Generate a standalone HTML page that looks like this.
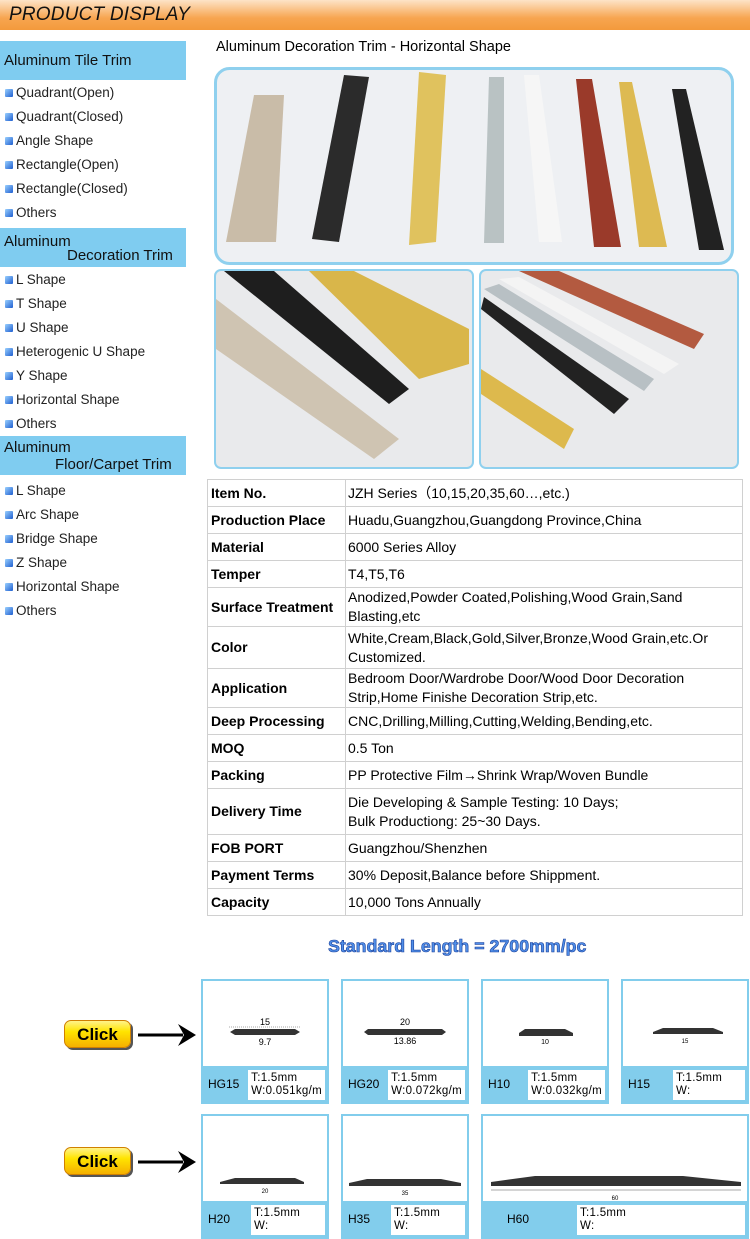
<!DOCTYPE html>
<html><head><meta charset="utf-8"><style>
*{margin:0;padding:0;box-sizing:border-box}
body{width:750px;height:1239px;position:relative;background:#fff;font-family:"Liberation Sans",Arial,sans-serif;color:#000;overflow:hidden}
.a{position:absolute}
.hdr{left:0;top:0;width:750px;height:30px;background:linear-gradient(#fde3c7,#f7a550 60%,#f39a3c)}
.hdr span{position:absolute;left:9px;top:4px;font-size:19px;font-style:italic;color:#111;letter-spacing:0.2px}
.sh{left:0;width:186px;height:39px;background:#7fccf0;font-size:15px;color:#111}
.it{left:5px;font-size:13.5px;color:#222}
.it:before{content:"";display:inline-block;width:8px;height:8px;margin-right:3px;background:linear-gradient(135deg,#9ad0ff,#1f5fd0);border-radius:1px;vertical-align:0px}
table{border-collapse:collapse;position:absolute;left:207px;top:479px;width:536px}
td{border:1px solid #d0d0d0;font-size:14px;padding:0 2px;line-height:19px;vertical-align:middle}
td.k{font-weight:bold;width:138px;padding-left:3px}
.card{border:2px solid #82cdec;background:#fff}
.card .bot{position:absolute;left:0;right:0;bottom:0;height:36px;background:#82cdec}
.card .lab{position:absolute;left:5px;bottom:11px;font-size:12px}
.card .spec{position:absolute;right:2px;bottom:2px;background:#fff;font-size:11.5px;line-height:13px;padding:2px 3px;letter-spacing:0.3px}
.click{width:67px;height:28px;border-radius:7px;background:linear-gradient(#fff38a,#ffe400 40%,#f5b000);box-shadow:2px 2px 0 #555;font-size:17px;font-weight:bold;text-align:center;line-height:28px;border:1px solid #d08000}
</style></head><body>
<div class="a hdr"><span>PRODUCT DISPLAY</span></div>

<div class="a sh" style="top:41px"><div style="position:absolute;left:4px;top:11px">Aluminum Tile Trim</div></div>
<div class="a it" style="top:85px">Quadrant(Open)</div>
<div class="a it" style="top:109px">Quadrant(Closed)</div>
<div class="a it" style="top:133px">Angle Shape</div>
<div class="a it" style="top:157px">Rectangle(Open)</div>
<div class="a it" style="top:181px">Rectangle(Closed)</div>
<div class="a it" style="top:205px">Others</div>
<div class="a sh" style="top:228px"><div style="position:absolute;left:4px;top:5px">Aluminum</div><div style="position:absolute;left:67px;top:19px">Decoration Trim</div></div>
<div class="a it" style="top:272px">L Shape</div>
<div class="a it" style="top:296px">T Shape</div>
<div class="a it" style="top:320px">U Shape</div>
<div class="a it" style="top:344px">Heterogenic U Shape</div>
<div class="a it" style="top:368px">Y Shape</div>
<div class="a it" style="top:392px">Horizontal Shape</div>
<div class="a it" style="top:416px">Others</div>
<div class="a sh" style="top:436px"><div style="position:absolute;left:4px;top:3px">Aluminum</div><div style="position:absolute;left:55px;top:20px">Floor/Carpet Trim</div></div>
<div class="a it" style="top:483px">L Shape</div>
<div class="a it" style="top:507px">Arc Shape</div>
<div class="a it" style="top:531px">Bridge Shape</div>
<div class="a it" style="top:555px">Z Shape</div>
<div class="a it" style="top:579px">Horizontal Shape</div>
<div class="a it" style="top:603px">Others</div>

<div class="a" style="left:216px;top:39px;font-size:14.5px">Aluminum Decoration Trim - Horizontal Shape</div>

<svg class="a" style="left:214px;top:67px" width="520" height="198">
<rect x="1.5" y="1.5" width="517" height="195" rx="14" fill="#eef0f3" stroke="#8fd0ee" stroke-width="3"/>
<polygon points="40,28 70,28 62,175 12,175" fill="#c9bca8"/>
<polygon points="130,8 155,10 125,175 98,172" fill="#2b2b2b"/>
<polygon points="205,5 232,8 222,175 195,178" fill="#e0c25e"/>
<polygon points="275,10 290,10 290,176 270,176" fill="#b9c2c3"/>
<polygon points="310,8 325,8 348,175 325,175" fill="#f6f6f6"/>
<polygon points="362,12 378,12 407,180 380,180" fill="#9a3a2a"/>
<polygon points="405,15 418,15 453,180 425,180" fill="#ddba52"/>
<polygon points="458,22 472,22 510,183 485,183" fill="#222"/>
</svg>
<svg class="a" style="left:214px;top:269px" width="260" height="200">
<rect x="1" y="1" width="258" height="198" rx="6" fill="#e9eaec" stroke="#8fd0ee" stroke-width="2"/>
<polygon points="2,30 2,80 160,190 185,170" fill="#cfc4b2"/>
<polygon points="10,2 60,2 195,120 175,135" fill="#1e1e1e"/>
<polygon points="95,2 140,2 255,60 255,95 205,110" fill="#d9b64a"/>
</svg>
<svg class="a" style="left:479px;top:269px" width="260" height="200">
<rect x="1" y="1" width="258" height="198" rx="6" fill="#e9eaec" stroke="#8fd0ee" stroke-width="2"/>
<polygon points="40,2 80,2 225,65 215,80" fill="#b35a40"/>
<polygon points="20,10 40,8 200,95 185,105" fill="#f4f4f4"/>
<polygon points="5,20 20,15 175,110 165,122" fill="#b8c0c4"/>
<polygon points="2,40 5,28 150,130 135,145" fill="#222"/>
<polygon points="2,100 2,125 85,180 95,160" fill="#ddb94d"/>
</svg>

<table>
<tr style="height:27px"><td class="k">Item No.</td><td>JZH Series（10,15,20,35,60…,etc.)</td></tr>
<tr style="height:27px"><td class="k">Production Place</td><td>Huadu,Guangzhou,Guangdong Province,China</td></tr>
<tr style="height:27px"><td class="k">Material</td><td>6000 Series Alloy</td></tr>
<tr style="height:27px"><td class="k">Temper</td><td>T4,T5,T6</td></tr>
<tr style="height:39px"><td class="k">Surface Treatment</td><td>Anodized,Powder Coated,Polishing,Wood Grain,Sand Blasting,etc</td></tr>
<tr style="height:42px"><td class="k">Color</td><td>White,Cream,Black,Gold,Silver,Bronze,Wood Grain,etc.Or Customized.</td></tr>
<tr style="height:39px"><td class="k">Application</td><td>Bedroom Door/Wardrobe Door/Wood Door Decoration Strip,Home Finishe Decoration Strip,etc.</td></tr>
<tr style="height:27px"><td class="k">Deep Processing</td><td>CNC,Drilling,Milling,Cutting,Welding,Bending,etc.</td></tr>
<tr style="height:27px"><td class="k">MOQ</td><td>0.5 Ton</td></tr>
<tr style="height:27px"><td class="k">Packing</td><td>PP Protective Film→Shrink Wrap/Woven Bundle</td></tr>
<tr style="height:46px"><td class="k">Delivery Time</td><td>Die Developing &amp; Sample Testing: 10 Days;<br>Bulk Productiong: 25~30 Days.</td></tr>
<tr style="height:27px"><td class="k">FOB PORT</td><td>Guangzhou/Shenzhen</td></tr>
<tr style="height:27px"><td class="k">Payment Terms</td><td>30% Deposit,Balance before Shippment.</td></tr>
<tr style="height:27px"><td class="k">Capacity</td><td>10,000 Tons Annually</td></tr>
</table>

<div class="a" style="left:328px;top:936px;font-size:17.8px;font-weight:bold;color:#4f8ee8;-webkit-text-stroke:0.6px #1a3f9a">Standard Length = 2700mm/pc</div>

<div class="a click" style="left:64px;top:1020px">Click</div>
<div class="a click" style="left:64px;top:1147px">Click</div>
<svg class="a" style="left:138px;top:1020px" width="60" height="30"><line x1="0" y1="15" x2="45" y2="15" stroke="#000" stroke-width="3"/><polygon points="40,4 58,15 40,26 46,15" fill="#000"/></svg>
<svg class="a" style="left:138px;top:1147px" width="60" height="30"><line x1="0" y1="15" x2="45" y2="15" stroke="#000" stroke-width="3"/><polygon points="40,4 58,15 40,26 46,15" fill="#000"/></svg>

<div class="a card" style="left:201px;top:979px;width:128px;height:125px">
<svg class="a" style="left:0;top:0" width="124" height="86"><text x="62" y="44" font-size="9" text-anchor="middle" font-family="Liberation Sans">15</text><line x1="26" y1="46" x2="98" y2="46" stroke="#555" stroke-width="0.6" stroke-dasharray="1,1"/><polygon points="32,48 92,48 97,51 92,54 32,54 27,51" fill="#333"/><text x="62" y="64" font-size="9" text-anchor="middle" font-family="Liberation Sans">9.7</text></svg>
<div class="bot"></div><div class="lab">HG15</div><div class="spec">T:1.5mm<br>W:0.051kg/m</div></div>
<div class="a card" style="left:341px;top:979px;width:128px;height:125px">
<svg class="a" style="left:0;top:0" width="124" height="86"><text x="62" y="44" font-size="9" text-anchor="middle" font-family="Liberation Sans">20</text><polygon points="25,48 99,48 103,51 99,54 25,54 21,51" fill="#333"/><text x="62" y="63" font-size="9" text-anchor="middle" font-family="Liberation Sans">13.86</text></svg>
<div class="bot"></div><div class="lab">HG20</div><div class="spec">T:1.5mm<br>W:0.072kg/m</div></div>
<div class="a card" style="left:481px;top:979px;width:128px;height:125px">
<svg class="a" style="left:0;top:0" width="124" height="86"><polygon points="42,48 82,48 90,52 90,55 36,55 36,52" fill="#333"/><text x="62" y="63" font-size="7" text-anchor="middle" font-family="Liberation Sans">10</text></svg>
<div class="bot"></div><div class="lab">H10</div><div class="spec">T:1.5mm<br>W:0.032kg/m</div></div>
<div class="a card" style="left:621px;top:979px;width:128px;height:125px">
<svg class="a" style="left:0;top:0" width="124" height="86"><polygon points="40,47 90,47 100,51 100,53 30,53 30,51" fill="#333"/><text x="62" y="62" font-size="6" text-anchor="middle" font-family="Liberation Sans">15</text></svg>
<div class="bot"></div><div class="lab">H15</div><div class="spec" style="width:72px">T:1.5mm<br>W:</div></div>

<div class="a card" style="left:201px;top:1114px;width:128px;height:125px">
<svg class="a" style="left:0;top:0" width="124" height="86"><polygon points="32,62 92,62 101,66 101,68 17,68 17,66" fill="#333"/><text x="62" y="77" font-size="6" text-anchor="middle" font-family="Liberation Sans">20</text></svg>
<div class="bot"></div><div class="lab">H20</div><div class="spec" style="width:74px">T:1.5mm<br>W:</div></div>
<div class="a card" style="left:341px;top:1114px;width:128px;height:125px">
<svg class="a" style="left:0;top:0" width="124" height="86"><polygon points="24,63 98,63 118,67 118,70 6,70 6,67" fill="#333"/><text x="62" y="79" font-size="6" text-anchor="middle" font-family="Liberation Sans">35</text></svg>
<div class="bot"></div><div class="lab">H35</div><div class="spec" style="width:74px">T:1.5mm<br>W:</div></div>
<div class="a card" style="left:481px;top:1114px;width:268px;height:125px">
<svg class="a" style="left:0;top:0" width="264" height="86"><polygon points="52,60 200,60 258,66 258,70 8,70 8,66" fill="#333"/><line x1="8" y1="74" x2="258" y2="74" stroke="#555" stroke-width="0.6"/><text x="132" y="84" font-size="6" text-anchor="middle" font-family="Liberation Sans">60</text></svg>
<div class="bot"></div><div class="lab" style="left:24px">H60</div><div class="spec" style="width:168px">T:1.5mm<br>W:</div></div>
</body></html>
